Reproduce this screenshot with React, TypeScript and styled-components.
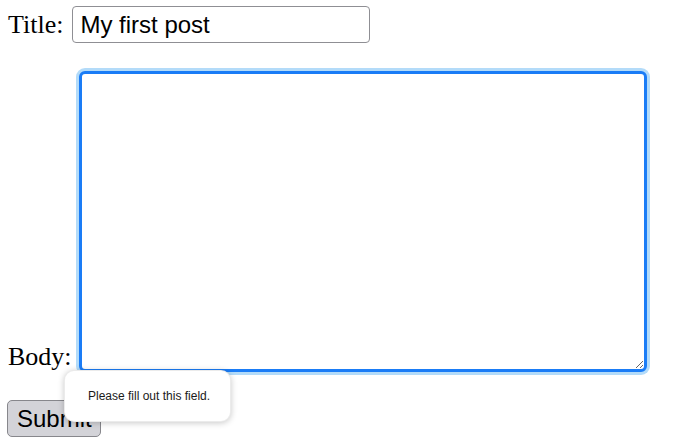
import React from "react";
import styled, { createGlobalStyle } from "styled-components";

const Global = createGlobalStyle`
  html, body { margin: 0; padding: 0; background: #ffffff; }
  body { font-family: "Liberation Serif", "Times New Roman", serif; }
`;

const Form = styled.form`
  position: relative;
  display: flex;
  flex-direction: column;
  align-items: flex-start;
  padding: 6px 8px 0 8px;
`;

const Row = styled.div<{ $gap: number; $top?: number }>`
  display: flex;
  align-items: flex-end;
  gap: ${(p) => p.$gap}px;
  margin-top: ${(p) => p.$top ?? 0}px;
`;

const Label = styled.label<{ $drop: number }>`
  font-family: "Liberation Serif", "Times New Roman", serif;
  font-size: 26px;
  line-height: 26px;
  color: #000;
  margin-bottom: ${(p) => p.$drop}px;
`;

const TextInput = styled.input`
  box-sizing: border-box;
  width: 298px;
  height: 37px;
  margin: 0;
  padding: 0 7px;
  border: 1px solid #8f8f94;
  border-radius: 4px;
  font-family: "Liberation Sans", Arial, sans-serif;
  font-size: 24px;
  color: #000;
  background: #fff;
  outline: none;
`;

const BodyArea = styled.textarea`
  box-sizing: border-box;
  width: 568px;
  height: 301px;
  margin: 0;
  padding: 4px;
  border: 3px solid #1a7cf6;
  border-radius: 6px;
  box-shadow: 0 0 0 3px #b3dbf9;
  outline: none;
  font-family: "Liberation Sans", Arial, sans-serif;
  font-size: 20px;
  background: #fff;
  display: block;
`;

const SubmitButton = styled.button`
  box-sizing: border-box;
  width: 94px;
  height: 37px;
  margin: 0;
  padding: 0 0 0 9px;
  text-align: left;
  border: 1px solid #87878c;
  border-radius: 5px;
  background: #d3d3d8;
  font-family: "Liberation Sans", Arial, sans-serif;
  font-size: 24px;
  color: #000;
  margin-left: -1px;
`;

const Tooltip = styled.div`
  position: absolute;
  left: 64px;
  top: 370px;
  box-sizing: border-box;
  width: 167px;
  height: 52px;
  display: flex;
  align-items: center;
  padding-left: 23px;
  background: #ffffff;
  border: 1px solid rgba(0, 0, 0, 0.08);
  border-radius: 10px;
  box-shadow: 0 1px 6px rgba(0, 0, 0, 0.22);
  font-family: "Liberation Sans", Arial, sans-serif;
  font-size: 12px;
  color: #1a1a1a;
`;

export default function App() {
  return (
    <>
      <Global />
      <Form onSubmit={(e) => e.preventDefault()}>
        <Row $gap={9}>
          <Label $drop={5}>Title:</Label>
          <TextInput defaultValue="My first post" />
        </Row>
        <Row $gap={7} $top={28}>
          <Label $drop={2}>Body:</Label>
          <BodyArea />
        </Row>
        <Row $gap={0} $top={28}>
          <SubmitButton type="submit">Submit</SubmitButton>
        </Row>
        <Tooltip>Please fill out this field.</Tooltip>
      </Form>
    </>
  );
}
